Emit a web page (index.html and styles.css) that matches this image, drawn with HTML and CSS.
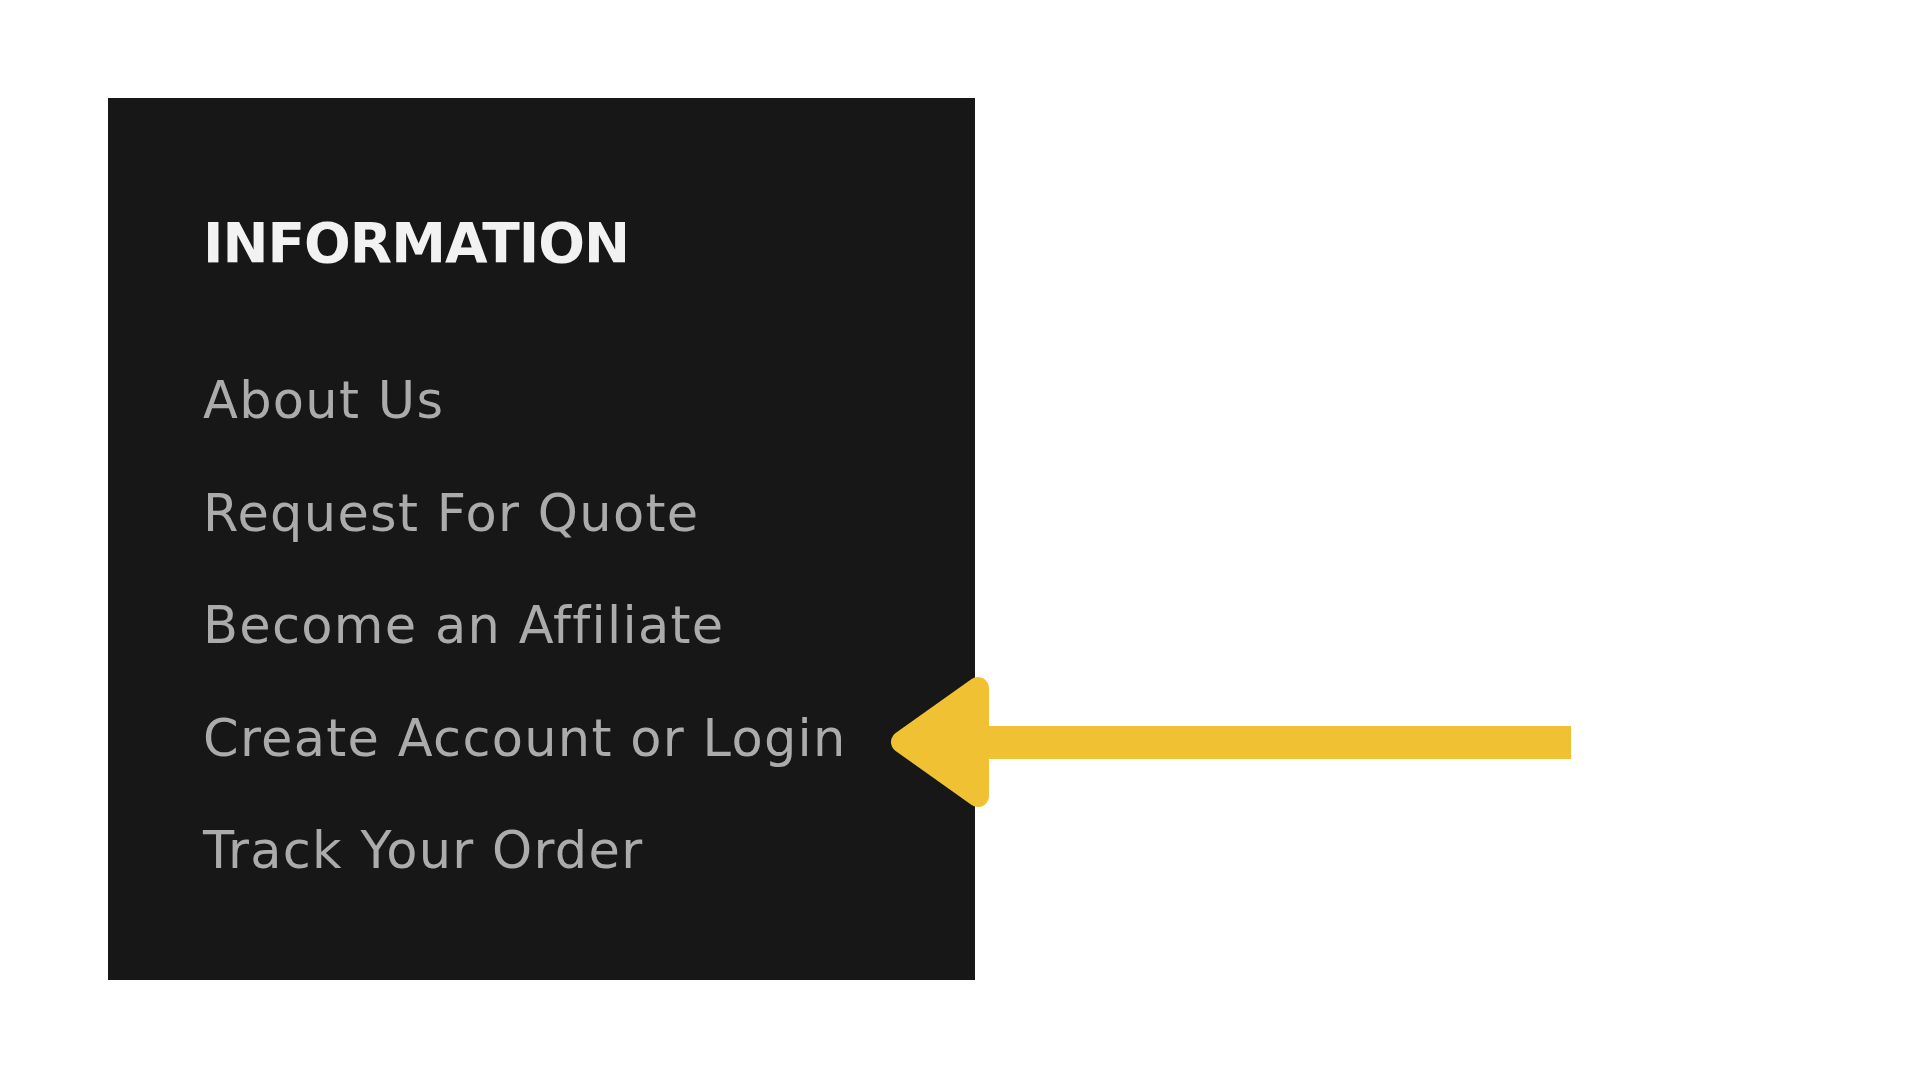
FILE: index.html
```html
<!DOCTYPE html>
<html lang="en">
<head>
<meta charset="utf-8">
<title>Information</title>
<link rel="stylesheet" href="styles.css">
</head>
<body>
<div class="stage">
  <section class="panel">
    <h2 class="panel-title">INFORMATION</h2>
    <ul class="links">
      <li><a href="#">About Us</a></li>
      <li><a href="#">Request For Quote</a></li>
      <li><a href="#">Become an Affiliate</a></li>
      <li><a href="#">Create Account or Login</a></li>
      <li><a href="#">Track Your Order</a></li>
    </ul>
  </section>
  <svg class="pointer" width="700" height="152" viewBox="0 0 700 152" aria-hidden="true">
    <rect x="100" y="60" width="591" height="33" fill="#f0c233"/>
    <polygon points="22,76 98,22 98,130" fill="#f0c233" stroke="#f0c233" stroke-width="22" stroke-linejoin="round"/>
  </svg>
</div>
</body>
</html>
```
FILE: styles.css
```css
html, body {
  margin: 0;
  padding: 0;
  background: #ffffff;
}

.stage {
  position: relative;
  width: 1920px;
  height: 1080px;
  padding: 98px 0 0 108px;
  box-sizing: border-box;
}

.panel {
  width: 867px;
  height: 882px;
  box-sizing: border-box;
  background: #171717;
  padding: 118px 0 0 95px;
  font-family: "DejaVu Sans", sans-serif;
}

.panel-title {
  margin: 0;
  font-size: 55px;
  line-height: 55px;
  font-weight: 700;
  color: #f2f2f2;
  letter-spacing: -1px;
}

.links {
  list-style: none;
  margin: 74px 0 0 0;
  padding: 0;
}

.links li {
  font-size: 51px;
  line-height: 112.5px;
  letter-spacing: 1.3px;
}

.links a {
  color: #ababab;
  text-decoration: none;
}

.pointer {
  position: absolute;
  left: 880px;
  top: 666px;
}
```
